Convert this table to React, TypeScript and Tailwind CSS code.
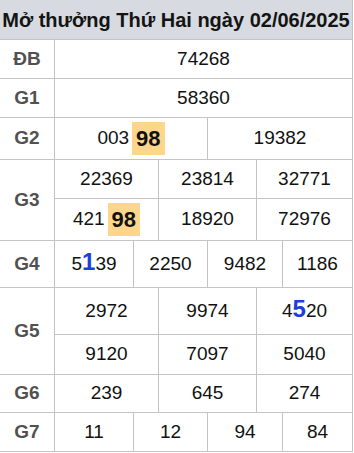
import type { ReactNode } from 'react';

const font = { fontFamily: '"Liberation Sans", Arial, sans-serif' };

function Hi({ children }: { children: ReactNode }) {
  return (
    <span className="ml-[3px] inline-block bg-[#fdd68b] px-[4px] text-[22px] font-bold leading-[33px] text-[#111]">
      {children}
    </span>
  );
}

function Big({ children }: { children: ReactNode }) {
  return <span className="text-[24px] font-bold leading-none text-[#1b3fdc]">{children}</span>;
}

// widths include each cell's right border; last cell takes the rest
function Line({ h, widths, cells, last }: { h: string; widths: string[]; cells: ReactNode[]; last?: boolean }) {
  return (
    <div className={`flex ${h} ${last ? '' : 'border-b border-[#c4c4c4]'}`}>
      {cells.map((c, i) => (
        <div
          key={i}
          className={`flex items-center justify-center ${i < cells.length - 1 ? `${widths[i]} shrink-0 border-r border-[#c4c4c4]` : 'flex-1'}`}
        >
          {c}
        </div>
      ))}
    </div>
  );
}

function Row({ label, children }: { label: string; children: ReactNode }) {
  return (
    <div className="flex border-b border-[#c4c4c4]">
      <div className="flex w-[55px] shrink-0 items-center justify-center border-r border-[#c4c4c4] text-[19px] font-bold text-[#515151]">
        {label}
      </div>
      <div className="flex flex-1 flex-col">{children}</div>
    </div>
  );
}

const three = ['w-[104px]', 'w-[98px]'];
const four = ['w-[79px]', 'w-[74px]', 'w-[75px]'];

export default function App() {
  return (
    <div className="w-[353px] bg-white text-[19px] text-[#111]" style={font}>
      <div className="border-r border-[#c4c4c4]">
        <div className="flex h-[40px] items-center justify-center border-b border-[#c4c4c4] bg-[#d7dbe1] text-[20px] font-bold text-[#141414]">
          Mở thưởng Thứ Hai ngày 02/06/2025
        </div>
        <Row label="ĐB">
          <Line h="h-[38px]" widths={[]} cells={['74268']} last />
        </Row>
        <Row label="G1">
          <Line h="h-[38px]" widths={[]} cells={['58360']} last />
        </Row>
        <Row label="G2">
          <Line
            h="h-[41px]"
            widths={['w-[153px]']}
            cells={[<span key="a" className="flex items-center">003<Hi>98</Hi></span>, '19382']}
            last
          />
        </Row>
        <Row label="G3">
          <Line h="h-[39px]" widths={three} cells={['22369', '23814', '32771']} />
          <Line
            h="h-[41px]"
            widths={three}
            cells={[<span key="a" className="flex items-center">421<Hi>98</Hi></span>, '18920', '72976']}
            last
          />
        </Row>
        <Row label="G4">
          <Line
            h="h-[46px]"
            widths={four}
            cells={[<span key="a">5<Big>1</Big>39</span>, '2250', '9482', '1186']}
            last
          />
        </Row>
        <Row label="G5">
          <Line h="h-[47px]" widths={three} cells={['2972', '9974', <span key="c">4<Big>5</Big>20</span>]} />
          <Line h="h-[39px]" widths={three} cells={['9120', '7097', '5040']} last />
        </Row>
        <Row label="G6">
          <Line h="h-[37px]" widths={three} cells={['239', '645', '274']} last />
        </Row>
        <Row label="G7">
          <Line h="h-[38px]" widths={four} cells={['11', '12', '94', '84']} last />
        </Row>
      </div>
    </div>
  );
}
